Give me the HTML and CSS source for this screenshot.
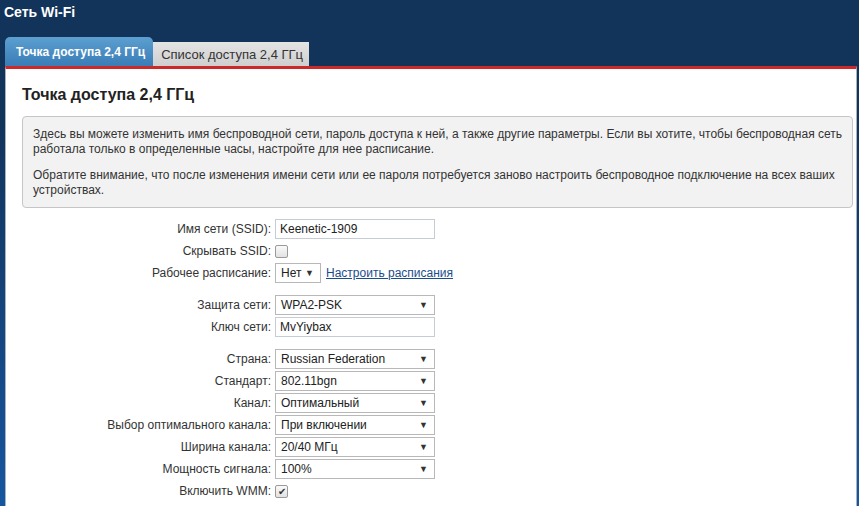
FILE: index.html
```html
<!DOCTYPE html>
<html lang="ru">
<head>
  <meta charset="UTF-8">
  <title>Сеть Wi-Fi</title>
  <link rel="stylesheet" href="styles.css">
</head>
<body>
  <div class="page-title">Сеть Wi-Fi</div>

  <!-- Tabs -->
  <div class="tabs">
    <div class="tab active">Точка доступа 2,4 ГГц</div>
    <div class="tab">Список доступа 2,4 ГГц</div>
  </div>

  <div class="panel">
    <h2>Точка доступа 2,4 ГГц</h2>
    <div class="info">
      <p>Здесь вы можете изменить имя беспроводной сети, пароль доступа к ней, а также другие параметры. Если вы хотите, чтобы беспроводная сеть работала только в определенные часы, настройте для нее расписание.</p>
      <p>Обратите внимание, что после изменения имени сети или ее пароля потребуется заново настроить беспроводное подключение на всех ваших устройствах.</p>
    </div>

    <div class="form-group">
      <div class="row">
        <label>Имя сети (SSID):</label>
        <input type="text" class="text-input" value="Keenetic-1909">
      </div>
      <div class="row">
        <label>Скрывать SSID:</label>
        <span class="check"></span>
      </div>
      <div class="row">
        <label>Рабочее расписание:</label>
        <span class="select small">Нет <i>▼</i></span>
        <a href="#" class="link">Настроить расписания</a>
      </div>
    </div>

    <div class="form-group">
      <div class="row">
        <label>Защита сети:</label>
        <span class="select">WPA2-PSK <i>▼</i></span>
      </div>
      <div class="row">
        <label>Ключ сети:</label>
        <input type="text" class="text-input" value="MvYiybax">
      </div>
    </div>

    <div class="form-group">
      <div class="row">
        <label>Страна:</label>
        <span class="select">Russian Federation <i>▼</i></span>
      </div>
      <div class="row">
        <label>Стандарт:</label>
        <span class="select">802.11bgn <i>▼</i></span>
      </div>
      <div class="row">
        <label>Канал:</label>
        <span class="select">Оптимальный <i>▼</i></span>
      </div>
      <div class="row">
        <label>Выбор оптимального канала:</label>
        <span class="select">При включении <i>▼</i></span>
      </div>
      <div class="row">
        <label>Ширина канала:</label>
        <span class="select">20/40 МГц <i>▼</i></span>
      </div>
      <div class="row">
        <label>Мощность сигнала:</label>
        <span class="select">100% <i>▼</i></span>
      </div>
      <div class="row">
        <label>Включить WMM:</label>
        <span class="check checked">✔</span>
      </div>
    </div>
  </div>
</body>
</html>
```

FILE: styles.css
```css
body {
  margin: 0;
  height: 506px;
  overflow: hidden;
  background: linear-gradient(to bottom, #12335a 0px, #12335a 120px, #1656a0 506px);
  font-family: "Liberation Sans", Arial, sans-serif;
  font-size: 12px;
  color: #333;
}
.page-title {
  height: 37px;
  padding: 4px 0 0 4px;
  box-sizing: border-box;
  color: #fff;
  font-size: 14px;
  font-weight: bold;
}
.tabs {
  display: flex;
  align-items: flex-end;
  height: 29px;
  padding-left: 5px;
}
.tab {
  height: 24px;
  padding: 0 6px 0 8px;
  line-height: 25px;
  font-size: 13px;
  background: linear-gradient(to bottom, #e4e4e4, #cfcfcf);
  color: #333;
}
.tab.active {
  height: 29px;
  line-height: 31px;
  padding: 0 8px 0 11px;
  font-size: 12px;
  border-radius: 5px 5px 0 0;
  background: linear-gradient(to bottom, #5c9fd0, #3a7db7);
  color: #fff;
  font-weight: bold;
}
.panel {
  margin: 0 2px 0 5px;
  height: 440px;
  border-top: 3px solid #cc2a2a;
  border-left: 1px solid #aab2bf;
  border-right: 1px solid #aab2bf;
  background: #fff;
  padding: 0 3px 0 16px;
}
.panel h2 {
  margin: 0;
  padding: 17px 0 0;
  height: 47px;
  box-sizing: border-box;
  font-size: 16px;
  color: #222;
}
.info {
  background: #f2f2f2;
  border: 1px solid #c6c6c6;
  border-radius: 4px;
  padding: 10px 10px 9px;
  line-height: 15px;
}
.info p {
  margin: 0 0 11px;
}
.info p:last-child {
  margin-bottom: 0;
}
.form-group {
  padding-top: 10px;
}
.form-group:first-of-type {
  padding-top: 11px;
}
.form-group:first-of-type .row:last-child {
  height: 21px;
}
.row {
  display: flex;
  align-items: center;
  height: 22px;
}
.row label {
  width: 253px;
  flex: 0 0 253px;
  text-align: right;
  padding-right: 4px;
  box-sizing: border-box;
}
.text-input {
  width: 160px;
  height: 20px;
  box-sizing: border-box;
  border: 1px solid #c5ccd4;
  padding: 0 4px;
  font-family: inherit;
  font-size: 12px;
  color: #222;
  margin: 0;
}
.select {
  display: flex;
  justify-content: space-between;
  align-items: center;
  width: 160px;
  height: 20px;
  box-sizing: border-box;
  border: 1px solid #b8b8b8;
  padding: 0 6px 0 5px;
  color: #222;
  background: #fff;
}
.select i {
  font-style: normal;
  font-size: 9px;
  color: #333;
}
.select.small {
  width: 46px;
}
.link {
  margin-left: 5px;
  color: #1b4d8c;
  text-decoration: underline;
}
.check {
  display: inline-block;
  width: 13px;
  height: 13px;
  box-sizing: border-box;
  border: 1px solid #9a9a9a;
  border-radius: 2px;
  background: linear-gradient(to bottom, #fafafa, #e2e2e2);
  font-size: 10px;
  line-height: 11px;
  text-align: center;
  color: #333;
}
```
